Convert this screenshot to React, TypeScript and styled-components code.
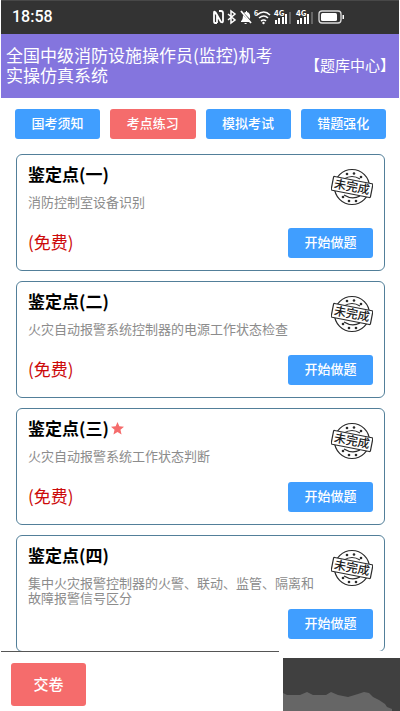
import React from "react";
import styled, { createGlobalStyle } from "styled-components";

const GlobalStyle = createGlobalStyle`
  * { box-sizing: border-box; }
  body {
    margin: 0;
    background: #fff;
    font-family: "Noto Sans CJK SC", "Noto Sans", sans-serif;
  }
  button { font-family: inherit; cursor: pointer; }
  h1, h2, p { margin: 0; }
`;

const Page = styled.div`
  position: relative;
  display: flex;
  flex-direction: column;
  height: 100vh;
  padding: 0 1px;
  overflow: hidden;
`;

const StatusBar = styled.div`
  display: flex;
  align-items: center;
  justify-content: space-between;
  flex: none;
  height: 34px;
  padding: 0 53px 2px 11px;
  background: #333;
  color: #fff;
  border-top: 1px solid #484848;
`;

const Clock = styled.time`
  font-family: Roboto, "Noto Sans", sans-serif;
  font-size: 16px;
  font-weight: 500;
  line-height: 20px;
`;

const StatusIcons = styled.svg`
  display: block;
  width: 134px;
  height: 18px;
`;

const Header = styled.header`
  display: flex;
  align-items: center;
  justify-content: space-between;
  flex: none;
  height: 64px;
  padding: 0 4px 2px 5px;
  background: #8475de;
  color: #fff;
`;

const Title = styled.h1`
  width: 272px;
  font-size: 17px;
  font-weight: 400;
  line-height: 20px;
`;

const BankLink = styled.a`
  flex: none;
  color: inherit;
  font-size: 15px;
  line-height: 20px;
  text-decoration: none;
`;

const Tabs = styled.nav`
  display: grid;
  grid-template-columns: repeat(4, 1fr);
  gap: 10px;
  flex: none;
  padding: 11px 13px 15px 14px;
`;

const Button = styled.button<{ $tone?: "blue" | "red"; $large?: boolean }>`
  height: ${(p) => (p.$large ? 43 : 30)}px;
  min-width: ${(p) => (p.$large ? 75 : 85)}px;
  padding: 0 0 2px;
  border: 0;
  border-radius: 3px;
  background: ${(p) => (p.$tone === "red" ? "#f56c6c" : "#409eff")};
  color: #fff;
  font-size: ${(p) => (p.$large ? 15 : 13)}px;
  font-weight: 500;
  line-height: 20px;
`;

const List = styled.main`
  display: flex;
  flex-direction: column;
  gap: 10px;
  flex: 1;
  min-height: 0;
  padding: 0 14px 0 15px;
  overflow: hidden;
`;

const Card = styled.article`
  display: flex;
  flex-direction: column;
  justify-content: space-between;
  flex: none;
  height: 117px;
  padding: 7px 11px 12px;
  border: 1px solid #527f99;
  border-radius: 6px;
`;

const CardTop = styled.div`
  display: flex;
  align-items: flex-start;
  justify-content: space-between;
  gap: 12px;
`;

const CardTitle = styled.h2`
  display: flex;
  align-items: center;
  gap: 2px;
  color: #000;
  font-size: 17px;
  font-weight: 700;
  line-height: 24px;
`;

const Description = styled.p`
  margin-top: 8px;
  color: #8c8c8c;
  font-size: 13px;
  line-height: 15px;
`;

const CardBottom = styled.div`
  display: flex;
  align-items: center;
  justify-content: space-between;
`;

const Price = styled.span`
  padding-bottom: 2px;
  color: #cc0a0a;
  font-size: 17px;
  line-height: 24px;
`;

const StampSvg = styled.svg`
  flex: none;
  display: block;
  width: 42px;
  height: 38px;
  margin-top: 6px;
`;

const Footer = styled.footer`
  flex: none;
  padding: 11px 10px 5px;
  border-top: 1px solid #555;
  background: #fff;
`;

const Preview = styled.aside`
  position: absolute;
  right: 0;
  bottom: 0;
  width: 121px;
  height: 60px;
  padding: 7px 0 0 4px;
  background: #fff;
`;

const PreviewSvg = styled.svg`
  display: block;
  width: 117px;
  height: 53px;
`;

const Watermark = styled.div`
  position: absolute;
  left: 124px;
  top: 318px;
  color: rgba(0, 0, 0, 0.014);
  font-size: 48px;
  line-height: 60px;
  white-space: nowrap;
  transform: rotate(-36deg);
  pointer-events: none;
`;

function Stamp() {
  return (
    <StampSvg viewBox="0 0 42 38" role="img" aria-label="未完成">
      <g fill="none" stroke="#2b2b2b" strokeWidth="1.2">
        <circle cx="21" cy="19" r="17.5" />
        <path d="M13 11Q21 6 29 11M13 27Q21 32 29 28" />
      </g>
      <g fill="#2b2b2b">
        <circle cx="16" cy="6" r="1.3" />
        <circle cx="23" cy="5.5" r="1.3" />
        <circle cx="30" cy="9" r="1.3" />
        <circle cx="12" cy="29" r="1.3" />
        <circle cx="18" cy="33" r="1.3" />
        <circle cx="25" cy="33" r="1.3" />
      </g>
      <g transform="rotate(11 21 19)">
        <rect x="1" y="12" width="40" height="14" rx="1" fill="#fff" stroke="#2b2b2b" strokeWidth="1.2" />
        <text x="21" y="23" textAnchor="middle" fontSize="12" fontWeight="500" fill="#222">
          未完成
        </text>
      </g>
    </StampSvg>
  );
}

function Star() {
  return (
    <svg width="13" height="13" viewBox="0 0 24 24" aria-hidden="true">
      <path fill="#f56c6c" d="M12 0l3.4 8 8.6.8-6.5 5.7 2 8.5L12 18.5 4.500 23l2-8.500L0 8.800 8.600 8z" />
    </svg>
  );
}

function SystemIcons() {
  return (
    <StatusIcons viewBox="0 0 134 18" role="img" aria-label="NFC 蓝牙 静音 WiFi 4G 电池">
      <g fill="none" stroke="#fff" strokeWidth="1.8">
        <path d="M5 15H3Q2 15 2 13V5Q2 3 3 4L9 14M4 4M7 3H9Q11 3 11 5V13Q11 15 9 14L5 7V15" />
        <path d="M16 6l7 6-4 3V3l4 3-7 6" strokeWidth="1.5" />
        <path d="M29 3l10 12" />
      </g>
      <path fill="#fff" d="M29 13q2-1 2-6l7 7h-9zM32 5q1-1 2-1V3h1v1q4 1 3 7zM32 15h3q-1 2-3 0z" />
      <text x="42" y="8" fontSize="7" fontWeight="700" fill="#fff">6</text>
      <g fill="none" stroke="#fff" strokeWidth="1.6">
        <path d="M45 7q7-6 13 0M47 10q5-4 9 0M49 13q3-2 5 0" />
      </g>
      <circle cx="51.5" cy="15" r="1.2" fill="#fff" />
      {[62, 84].map((x) => (
        <g key={x} fill="#fff">
          <text x={x} y="8" fontSize="8" fontWeight="700">4G</text>
          <rect x={x + 1} y="12" width="2" height="4" />
          <rect x={x + 4} y="10" width="2" height="6" />
          <rect x={x + 8} y="9" width="2" height="7" />
          <rect x={x + 11} y="6" width="2" height="10" />
          <rect x={x + 15} y="4" width="2" height="12" fill="#666" />
        </g>
      ))}
      <rect x="107" y="3" width="22" height="12" rx="3" fill="none" stroke="#ddd" strokeWidth="1.3" />
      <rect x="109" y="5" width="16" height="8" rx="1.5" fill="#fff" />
      <rect x="130.5" y="7" width="1.5" height="4" fill="#fff" />
    </StatusIcons>
  );
}

const tabs = ["国考须知", "考点练习", "模拟考试", "错题强化"];

const cards = [
  { title: "鉴定点(一)", text: "消防控制室设备识别", free: true },
  { title: "鉴定点(二)", text: "火灾自动报警系统控制器的电源工作状态检查", free: true },
  { title: "鉴定点(三)", text: "火灾自动报警系统工作状态判断", free: true, starred: true },
  { title: "鉴定点(四)", text: "集中火灾报警控制器的火警、联动、监管、隔离和故障报警信号区分" },
];

export default function App() {
  return (
    <>
      <GlobalStyle />
      <Page>
        <StatusBar>
          <Clock>18:58</Clock>
          <SystemIcons />
        </StatusBar>
        <Header>
          <Title>全国中级消防设施操作员(监控)机考实操仿真系统</Title>
          <BankLink href="#bank">【题库中心】</BankLink>
        </Header>
        <Tabs>
          {tabs.map((t, i) => (
            <Button key={t} $tone={i === 1 ? "red" : "blue"}>{t}</Button>
          ))}
        </Tabs>
        <List>
          {cards.map((c) => (
            <Card key={c.title}>
              <CardTop>
                <div>
                  <CardTitle>
                    {c.title}
                    {c.starred && <Star />}
                  </CardTitle>
                  <Description>{c.text}</Description>
                </div>
                <Stamp />
              </CardTop>
              <CardBottom>
                <Price>{c.free ? "(免费)" : ""}</Price>
                <Button>开始做题</Button>
              </CardBottom>
            </Card>
          ))}
        </List>
        <Footer>
          <Button $tone="red" $large>交卷</Button>
        </Footer>
        <Watermark aria-hidden="true">版权所有</Watermark>
        <Preview>
          <PreviewSvg viewBox="0 0 117 53" preserveAspectRatio="none" aria-hidden="true">
            <rect width="117" height="53" fill="#404040" />
            <path
              fill="#666"
              d="M0 35L4 37 17 37 24 34 30 37 43 37 48 34 55 37 65 39 75 36 81 34 86 35 90 39 96 42 102 46 104 49 109 51V53H0Z"
            />
          </PreviewSvg>
        </Preview>
      </Page>
    </>
  );
}
